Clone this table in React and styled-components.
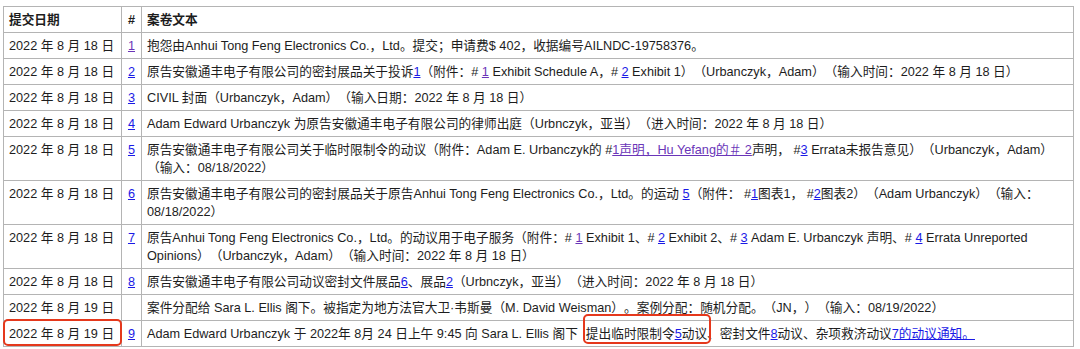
import React from 'react';
import styled, { createGlobalStyle } from 'styled-components';

const GlobalStyle = createGlobalStyle`
  html, body {
    margin: 0;
    padding: 0;
    background: #fff;
  }
  body {
    font-family: 'Liberation Sans', 'Noto Sans CJK SC', sans-serif;
    color: #1d1d1d;
    text-spacing-trim: space-all;
  }
`;

const Page = styled.div`
  padding: 6px 6px 0 3px;
`;

const DocketTable = styled.table`
  width: 1071px;
  border-collapse: collapse;
  table-layout: fixed;
  font-size: 12.7px;
  line-height: 18px;
`;

const Cell = styled.td`
  border: 1px solid #b4b4b4;
  padding: 4px 5px 3px 5px;
  vertical-align: top;
  position: relative;
  white-space: ${(p) => (p.$nowrap ? 'nowrap' : 'normal')};
  text-align: ${(p) => (p.$center ? 'center' : 'left')};
`;

const HeadCell = styled(Cell).attrs({ as: 'th' })`
  font-weight: bold;
`;

const DocLink = styled.a`
  color: ${(p) => (p.$visited ? '#6a35b8' : '#1a1ae6')};
  text-decoration: underline;
  cursor: pointer;
`;

// red annotation frames drawn over the screenshot
const MarkedCell = styled(Cell)`
  &::after {
    content: '';
    position: absolute;
    left: -1px;
    top: -2px;
    right: -1px;
    bottom: 0;
    border: 2px solid #e5381c;
    border-radius: 5px;
    pointer-events: none;
  }
`;

const Highlight = styled.span`
  position: relative;
  margin-left: 8px;
  &::after {
    content: '';
    position: absolute;
    left: -3px;
    top: -13px;
    right: 9px;
    bottom: -3px;
    border: 2px solid #e5381c;
    border-radius: 5px;
    pointer-events: none;
  }
`;

const L = ({ v, children }) => (
  <DocLink href="#" $visited={v} onClick={(e) => e.preventDefault()}>
    {children}
  </DocLink>
);

const rows = [
  {
    date: '2022 年 8 月 18 日',
    no: <L v>1</L>,
    text: <>抱怨由Anhui Tong Feng Electronics Co.，Ltd。提交；申请费$ 402，收据编号AILNDC-19758376。</>,
  },
  {
    date: '2022 年 8 月 18 日',
    no: <L>2</L>,
    text: (
      <>
        原告安徽通丰电子有限公司的密封展品关于投诉<L>1</L>（附件：# <L v>1</L> Exhibit Schedule A，# <L>2</L> Exhibit 1）（Urbanczyk，Adam）（输入时间：2022 年 8 月 18 日）
      </>
    ),
  },
  {
    date: '2022 年 8 月 18 日',
    no: <L>3</L>,
    text: <>CIVIL 封面（Urbanczyk，Adam）（输入日期：2022 年 8 月 18 日）</>,
  },
  {
    date: '2022 年 8 月 18 日',
    no: <L>4</L>,
    text: <>Adam Edward Urbanczyk 为原告安徽通丰电子有限公司的律师出庭（Urbnczyk，亚当）（进入时间：2022 年 8 月 18 日）</>,
  },
  {
    date: '2022 年 8 月 18 日',
    no: <L>5</L>,
    text: (
      <>
        原告安徽通丰电子有限公司关于临时限制令的动议（附件：Adam E. Urbanczyk的 #<L v>1声明，Hu Yefang的＃ 2</L>声明， #<L>3</L> Errata未报告意见）（Urbanczyk，Adam）（输入：08/18/2022）
      </>
    ),
  },
  {
    date: '2022 年 8 月 18 日',
    no: <L>6</L>,
    text: (
      <>
        原告安徽通丰电子有限公司的密封展品关于原告Anhui Tong Feng Electronics Co.，Ltd。的运动 <L>5</L>（附件： #<L>1</L>图表1， #<L>2</L>图表2）（Adam Urbanczyk）（输入：08/18/2022）
      </>
    ),
  },
  {
    date: '2022 年 8 月 18 日',
    no: <L>7</L>,
    text: (
      <>
        原告Anhui Tong Feng Electronics Co.，Ltd。的动议用于电子服务（附件：# <L v>1</L> Exhibit 1、# <L>2</L> Exhibit 2、# <L>3</L> Adam E. Urbanczyk 声明、# <L>4</L> Errata Unreported Opinions）（Urbanczyk，Adam）（输入时间：2022 年 8 月 18 日）
      </>
    ),
  },
  {
    date: '2022 年 8 月 18 日',
    no: <L>8</L>,
    text: (
      <>
        原告安徽通丰电子有限公司动议密封文件展品<L>6</L>、展品<L>2</L>（Urbnczyk，亚当）（进入时间：2022 年 8 月 18 日）
      </>
    ),
  },
  {
    date: '2022 年 8 月 19 日',
    no: null,
    text: <>案件分配给 Sara L. Ellis 阁下。被指定为地方法官大卫·韦斯曼（M. David Weisman）。案例分配：随机分配。（JN，）（输入：08/19/2022）</>,
  },
  {
    date: '2022 年 8 月 19 日',
    no: <L>9</L>,
    marked: true,
    text: (
      <>
        Adam Edward Urbanczyk 于 2022年 8月 24 日上午 9:45 向 Sara L. Ellis 阁下
        <Highlight>
          提出临时限制令<L>5</L>动议、
        </Highlight>
        密封文件<L>8</L>动议、杂项救济动议<L>7的动议通知。</L>
      </>
    ),
  },
];

export default function App() {
  return (
    <Page>
      <GlobalStyle />
      <DocketTable>
        <colgroup>
          <col style={{ width: 118 }} />
          <col style={{ width: 20 }} />
          <col />
        </colgroup>
        <thead>
          <tr>
            <HeadCell>提交日期</HeadCell>
            <HeadCell $center>#</HeadCell>
            <HeadCell>案卷文本</HeadCell>
          </tr>
        </thead>
        <tbody>
          {rows.map((r, i) => {
            const DateCell = r.marked ? MarkedCell : Cell;
            return (
              <tr key={i}>
                <DateCell $nowrap>{r.date}</DateCell>
                <Cell $center>{r.no}</Cell>
                <Cell>{r.text}</Cell>
              </tr>
            );
          })}
        </tbody>
      </DocketTable>
    </Page>
  );
}
